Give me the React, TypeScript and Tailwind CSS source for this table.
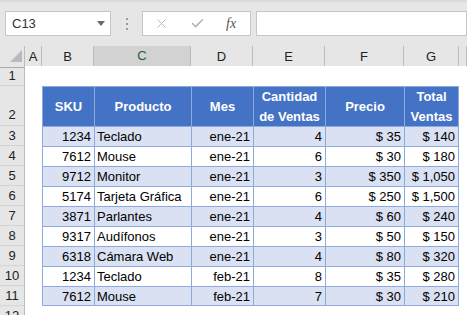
import { Check, X } from 'lucide-react';

// Excel sheet: sales table with banded rows
const rows = [
  ['1234', 'Teclado', 'ene-21', '4', '$ 35', '$ 140'],
  ['7612', 'Mouse', 'ene-21', '6', '$ 30', '$ 180'],
  ['9712', 'Monitor', 'ene-21', '3', '$ 350', '$ 1,050'],
  ['5174', 'Tarjeta Gráfica', 'ene-21', '6', '$ 250', '$ 1,500'],
  ['3871', 'Parlantes', 'ene-21', '4', '$ 60', '$ 240'],
  ['9317', 'Audífonos', 'ene-21', '3', '$ 50', '$ 150'],
  ['6318', 'Cámara Web', 'ene-21', '4', '$ 80', '$ 320'],
  ['1234', 'Teclado', 'feb-21', '8', '$ 35', '$ 280'],
  ['7612', 'Mouse', 'feb-21', '7', '$ 30', '$ 210'],
];

const grid = 'grid grid-cols-[25px_17px_52px_97px_62px_72px_79px_55px_1fr]';
const letters = ['A', 'B', 'C', 'D', 'E', 'F', 'G', ''];

function RowHead({ n, tall }: { n: number; tall?: boolean }) {
  return (
    <div
      className={`flex ${tall ? 'h-[40px] items-end pb-[1px]' : 'h-[20px] items-center'} justify-center border-r border-b border-r-[#bcbcbc] border-b-[#d4d4d4] bg-[#e6e6e6] text-[13px] text-[#222]`}
    >
      {n}
    </div>
  );
}

export default function App() {
  return (
    <div className="h-[315px] w-[467px] overflow-hidden bg-white font-['Liberation_Sans',sans-serif]">
      {/* formula bar */}
      <div className="flex h-[46px] items-start border-t-2 border-[#dadada] bg-[#e6e6e6] pl-[5px] pt-[9px]">
        <div className="flex h-[25px] w-[106px] items-center justify-between border border-[#c6c6c6] bg-white pl-[6px] pr-[5px] text-[13px] text-[#333]">
          <span>C13</span>
          <svg width="8" height="5" viewBox="0 0 8 5">
            <path d="M0 0h8L4 5z" fill="#6a6a6a" />
          </svg>
        </div>
        <div className="flex h-[25px] w-[31px] flex-col items-center justify-center gap-[3px]">
          <span className="size-[2px] bg-[#9a9a9a]" />
          <span className="size-[2px] bg-[#9a9a9a]" />
          <span className="size-[2px] bg-[#9a9a9a]" />
        </div>
        <div className="flex h-[25px] w-[109px] items-center border border-[#c6c6c6] bg-white">
          <X className="ml-[11px] size-[15px] text-[#b4b4b4]" strokeWidth={1.5} />
          <Check className="ml-[21px] size-[15px] text-[#b4b4b4]" strokeWidth={2.5} />
          <span className="ml-[21px] font-['Liberation_Serif',serif] text-[14px] italic text-[#555]">fx</span>
        </div>
        <div className="ml-[5px] h-[25px] flex-1 border border-[#c6c6c6] bg-white" />
      </div>

      {/* column letters */}
      <div className={`${grid} h-[20px]`}>
        <div className="relative border-r border-b border-r-[#bcbcbc] border-b-[#ababab] bg-[#e6e6e6]">
          <svg className="absolute left-[10px] top-[4px]" width="12" height="12" viewBox="0 0 12 12">
            <path d="M12 0v12H0z" fill="#b9b9b9" />
          </svg>
        </div>
        {letters.map((l, i) =>
          l === 'C' ? (
            <div
              key={i}
              className="flex items-center justify-center border-r border-b-2 border-r-[#bcbcbc] border-b-[#217346] bg-[#d2d2d2] text-[13px] text-[#1e5e3a]"
            >
              {l}
            </div>
          ) : (
            <div
              key={i}
              className="flex items-center justify-center border-r border-b border-r-[#bcbcbc] border-b-[#ababab] bg-[#e6e6e6] text-[13px] text-[#222]"
            >
              {l}
            </div>
          ),
        )}
      </div>

      {/* row 1 */}
      <div className={grid}>
        <RowHead n={1} />
        <div className="col-span-8 bg-white" />
      </div>

      {/* row 2: table header */}
      <div className={grid}>
        <RowHead n={2} tall />
        <div />
        {['SKU', 'Producto', 'Mes', 'Cantidad de Ventas', 'Precio', 'Total Ventas'].map((h, i) => (
          <div
            key={h}
            className={`flex h-[40px] items-center justify-center border-t border-l border-[#8ea9db] bg-[#4472c4] px-[2px] text-center text-[13px] font-bold leading-[20px] text-white ${i === 5 ? 'border-r' : ''}`}
          >
            {h}
          </div>
        ))}
        <div />
      </div>

      {/* data rows */}
      {rows.map((r, ri) => {
        const band = ri % 2 === 0 ? 'bg-[#d9e1f2]' : 'bg-white';
        const last = ri === rows.length - 1;
        return (
          <div key={ri} className={grid}>
            <RowHead n={ri + 3} />
            <div />
            {r.map((v, ci) => (
              <div
                key={ci}
                className={`h-[20px] border-t border-l border-[#8ea9db] ${band} text-[13px] leading-[19px] text-black ${
                  ci === 1 ? 'pl-[2px] text-left' : 'pr-[3px] text-right'
                } ${ci === 5 ? 'border-r' : ''} ${last ? 'border-b' : ''} whitespace-nowrap`}
              >
                {v}
              </div>
            ))}
            <div />
          </div>
        );
      })}

      {/* row 12, cut off by the window edge as in the original */}
      <div className={grid}>
        <RowHead n={12} />
        <div className="col-span-8 bg-white" />
      </div>
    </div>
  );
}
